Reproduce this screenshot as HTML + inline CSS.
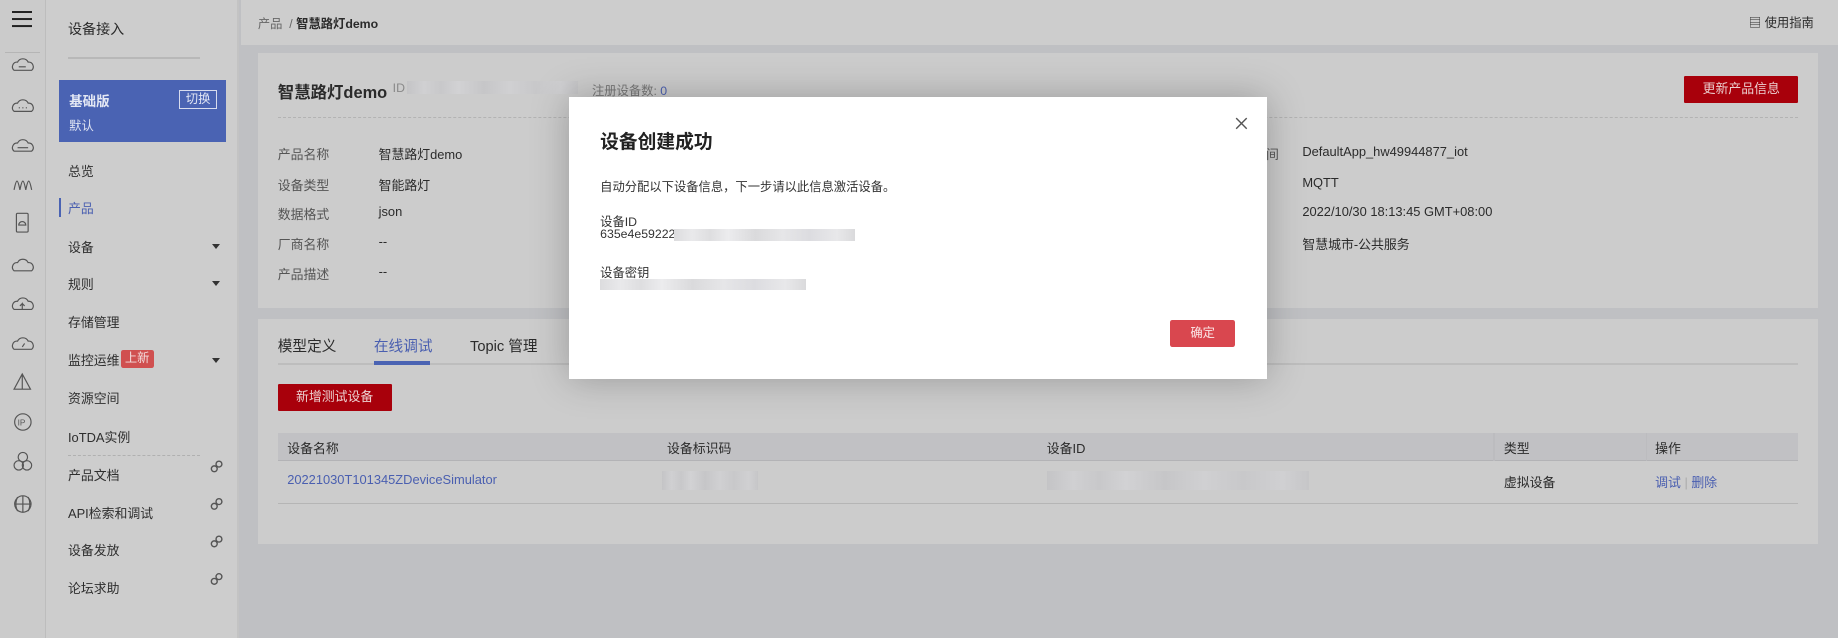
<!DOCTYPE html>
<html><head><meta charset="utf-8"><style>
*{margin:0;padding:0;box-sizing:border-box}
html,body{width:1838px;height:638px;overflow:hidden;background:#bfc0c3}
#w{zoom:1.1722;width:1568px;height:544px;position:relative;font-family:"Liberation Sans","Noto Sans CJK SC",sans-serif;font-size:11px;color:#2b2b2b}
.a{position:absolute;white-space:nowrap}
.rail{left:0;top:0;width:39px;height:544px;background:#cbcbcb;border-right:1px solid #bdbdbd}
.side{left:39px;top:0;width:165px;height:544px;background:#cdcdcd;border-right:2px solid #c3c3c3}
.nav{left:58px;font-size:11px;color:#2e2e2e}
.tri{left:181px;width:0;height:0;border-left:4px solid transparent;border-right:4px solid transparent;border-top:5px solid #333}
.card{background:#cccccc}
.lbl{left:237px;color:#555}
.val{left:323px}
.blur{background:linear-gradient(90deg,#c4c4c6,#d0d0d2 10%,#c8c8ca 20%,#d2d2d4 30%,#c6c6c8 45%,#d0d0d2 60%,#c8c8ca 75%,#d0d0d2 90%,#c6c6c8)}
.wblur{background:linear-gradient(90deg,#dcdcde,#e9e9eb 10%,#dedee0 20%,#ececee 30%,#dadadc 45%,#e6e6e8 60%,#dcdce0 75%,#e8e8ea 90%,#dadadc)}
</style></head><body><div id="w">
<div class="a rail">
<div class="a" style="left:10px;top:9px;width:17px;height:2px;background:#222;box-shadow:0 6px #222,0 12px #222"></div>
<div class="a" style="left:4px;top:44px;width:30px;height:1px;background:#b5b5b5"></div>
<svg class="a" style="left:0;top:0" width="39" height="544" fill="none" stroke="#555" stroke-width="1">
<path d="M12 60 a4 4 0 0 1 3-7 a5 5 0 0 1 9 0 a4 4 0 0 1 3 7 z"/><path d="M16 57h6"/>
<path d="M12 95 a4 4 0 0 1 3-7 a5 5 0 0 1 9 0 a4 4 0 0 1 3 7 z"/><path d="M16 92h1M19 92h1M22 92h1"/>
<path d="M12 129 a4 4 0 0 1 3-7 a5 5 0 0 1 9 0 a4 4 0 0 1 3 7 z"/><path d="M15 126h9"/>
<path d="M12 162c2-10 3-10 5 0c2-10 3-10 5 0c2-10 3-10 5 0"/>
<rect x="14" y="182" width="10" height="16" rx="1"/><path d="M16 192a3 3 0 0 1 6 0z"/>
<path d="M12 231 a4 4 0 0 1 3-7 a5 5 0 0 1 9 0 a4 4 0 0 1 3 7 z"/>
<path d="M12 264 a4 4 0 0 1 3-7 a5 5 0 0 1 9 0 a4 4 0 0 1 3 7 z"/><path d="M19 264v-5l-2 2M19 259l2 2"/>
<path d="M12 298 a4 4 0 0 1 3-7 a5 5 0 0 1 9 0 a4 4 0 0 1 3 7 z"/><path d="M19 296l2-3"/>
<path d="M19 319l-7 13h14z M19 319v13"/>
<circle cx="19.5" cy="360" r="7"/><text x="15" y="363" font-size="7" fill="#555" stroke="none" font-family="Liberation Sans">IP</text>
<circle cx="19.5" cy="390" r="4"/><circle cx="16" cy="397" r="4"/><circle cx="23" cy="397" r="4"/>
<circle cx="19.5" cy="430" r="7"/><path d="M12.5 430h14M19.5 423v14M15 424c-2 4-2 8 0 12M24 424c2 4 2 8 0 12"/>
</svg>
</div>
<div class="a side"></div>
<div class="a" style="left:58px;top:16px;font-size:12px">设备接入</div>
<div class="a" style="left:58px;top:49px;width:113px;height:1px;background:#b8b8b8"></div>
<div class="a" style="left:50px;top:68px;width:143px;height:53px;background:#4a63b3"></div>
<div class="a" style="left:59px;top:77px;color:#e4e8f4;font-weight:bold;font-size:11.5px">基础版</div>
<div class="a" style="left:59px;top:99px;color:#dfe4f2;font-size:10.5px">默认</div>
<div class="a" style="left:153px;top:77px;width:32px;height:16px;border:1px solid #d8dcee;color:#e2e6f4;font-size:10.5px;text-align:center;line-height:14px">切换</div>
<div class="a nav" style="top:137px">总览</div>
<div class="a" style="left:50px;top:169px;width:2px;height:16px;background:#4a63b3"></div>
<div class="a nav" style="top:169px;color:#4a5fb0">产品</div>
<div class="a nav" style="top:202px">设备</div><div class="a tri" style="top:208px"></div>
<div class="a nav" style="top:234px">规则</div><div class="a tri" style="top:240px"></div>
<div class="a nav" style="top:266px">存储管理</div>
<div class="a nav" style="top:299px">监控运维</div>
<div class="a" style="left:103px;top:299px;width:28px;height:15px;background:#d05050;color:#f3dede;font-size:10.5px;line-height:15px;text-align:center;border-radius:2px">上新</div>
<div class="a tri" style="top:305px"></div>
<div class="a nav" style="top:331px">资源空间</div>
<div class="a nav" style="top:364px">IoTDA实例</div>
<div class="a" style="left:58px;top:388px;width:113px;border-top:1px dashed #b0b0b0"></div>
<div class="a nav" style="top:397px">产品文档</div>
<div class="a nav" style="top:429px">API检索和调试</div>
<div class="a nav" style="top:461px">设备发放</div>
<div class="a nav" style="top:493px">论坛求助</div>
<svg class="a" style="left:178px;top:392px" width="14" height="120" fill="none" stroke="#555" stroke-width="1.2">
<g><rect x="6" y="1" width="5" height="5" rx="2.5" transform="rotate(45 8.5 3.5)"/><rect x="2" y="5" width="5" height="5" rx="2.5" transform="rotate(45 4.5 7.5)"/></g>
<g transform="translate(0,32)"><rect x="6" y="1" width="5" height="5" rx="2.5" transform="rotate(45 8.5 3.5)"/><rect x="2" y="5" width="5" height="5" rx="2.5" transform="rotate(45 4.5 7.5)"/></g>
<g transform="translate(0,64)"><rect x="6" y="1" width="5" height="5" rx="2.5" transform="rotate(45 8.5 3.5)"/><rect x="2" y="5" width="5" height="5" rx="2.5" transform="rotate(45 4.5 7.5)"/></g>
<g transform="translate(0,96)"><rect x="6" y="1" width="5" height="5" rx="2.5" transform="rotate(45 8.5 3.5)"/><rect x="2" y="5" width="5" height="5" rx="2.5" transform="rotate(45 4.5 7.5)"/></g>
</svg>
<!-- header -->
<div class="a" style="left:206px;top:0;width:1362px;height:38px;background:#cdcdcd"></div>
<div class="a" style="left:220px;top:12px;font-size:10.5px;color:#666">产品 &nbsp;/ <b style="color:#2b2b2b;font-weight:bold">智慧路灯demo</b></div>
<div class="a" style="left:1492px;top:11px;font-size:10.5px">&#9636; 使用指南</div>
<!-- card 1 -->
<div class="a card" style="left:220px;top:45px;width:1331px;height:218px"></div>
<div class="a" style="left:237px;top:67px;font-size:14px;font-weight:bold">智慧路灯demo</div>
<div class="a" style="left:335px;top:69px;font-size:10.5px;color:#888">ID</div>
<div class="a blur" style="left:347px;top:69px;width:146px;height:11px"></div>
<div class="a" style="left:505px;top:69px;font-size:10.5px;color:#777">注册设备数: <span style="color:#4a5fb0">0</span></div>
<div class="a" style="left:1437px;top:65px;width:97px;height:23px;background:#a8000b;color:#ecd0d0;text-align:center;line-height:23px;font-size:11px;border-radius:1px">更新产品信息</div>
<div class="a" style="left:237px;top:100px;width:1297px;border-top:1px dashed #b3b3b3"></div>
<div class="a lbl" style="top:123px">产品名称</div><div class="a val" style="top:123px">智慧路灯demo</div>
<div class="a lbl" style="top:149px">设备类型</div><div class="a val" style="top:149px">智能路灯</div>
<div class="a lbl" style="top:174px">数据格式</div><div class="a val" style="top:174px">json</div>
<div class="a lbl" style="top:200px">厂商名称</div><div class="a val" style="top:200px">--</div>
<div class="a lbl" style="top:225px">产品描述</div><div class="a val" style="top:225px">--</div>
<div class="a" style="left:1080px;top:123px;color:#555">间</div>
<div class="a" style="left:1111px;top:123px">DefaultApp_hw49944877_iot</div>
<div class="a" style="left:1111px;top:149px">MQTT</div>
<div class="a" style="left:1111px;top:174px">2022/10/30 18:13:45 GMT+08:00</div>
<div class="a" style="left:1111px;top:200px">智慧城市-公共服务</div>
<!-- card 2 -->
<div class="a card" style="left:220px;top:272px;width:1331px;height:192px"></div>
<div class="a" style="left:237px;top:310px;width:1297px;height:1px;background:#bdbdbd"></div>
<div class="a" style="left:237px;top:286px;font-size:12.5px">模型定义</div>
<div class="a" style="left:319px;top:286px;font-size:12.5px;color:#4a5fb0">在线调试</div>
<div class="a" style="left:319px;top:308px;width:48px;height:3px;background:#4a63b3"></div>
<div class="a" style="left:401px;top:286px;font-size:12.5px">Topic 管理</div>
<div class="a" style="left:237px;top:328px;width:97px;height:23px;background:#a8000b;color:#ecd0d0;text-align:center;line-height:23px;font-size:11px;border-radius:1px">新增测试设备</div>
<div class="a" style="left:237px;top:369px;width:1297px;height:24px;background:#c1c1c4;border-bottom:1px solid #b3b3b6"></div>
<div class="a" style="left:245px;top:374px">设备名称</div>
<div class="a" style="left:569px;top:374px">设备标识码</div>
<div class="a" style="left:893px;top:374px">设备ID</div>
<div class="a" style="left:1274px;top:369px;width:1px;height:24px;background:#bcbcbf"></div>
<div class="a" style="left:1404px;top:369px;width:1px;height:24px;background:#bcbcbf"></div>
<div class="a" style="left:1283px;top:374px">类型</div>
<div class="a" style="left:1412px;top:374px">操作</div>
<div class="a" style="left:245px;top:403px;color:#4a5fb0">20221030T101345ZDeviceSimulator</div>
<div class="a blur" style="left:565px;top:402px;width:82px;height:16px"></div>
<div class="a blur" style="left:893px;top:402px;width:224px;height:16px"></div>
<div class="a" style="left:1283px;top:403px">虚拟设备</div>
<div class="a" style="left:1412px;top:403px;color:#4a5fb0">调试 <span style="color:#aaa">|</span> 删除</div>
<div class="a" style="left:237px;top:429px;width:1297px;height:1px;background:#b5b5b5"></div>
<!-- modal -->
<div class="a" style="left:485px;top:83px;width:596px;height:240px;background:#fff;box-shadow:0 0 30px rgba(0,0,0,.25)"></div>
<svg class="a" style="left:1054px;top:100px" width="11" height="11" stroke="#555" stroke-width="1.2"><path d="M1 1L10 10M10 1L1 10"/></svg>
<div class="a" style="left:512px;top:108px;font-size:16px;font-weight:bold;color:#222">设备创建成功</div>
<div class="a" style="left:512px;top:151px;font-size:10.5px;color:#333">自动分配以下设备信息，下一步请以此信息激活设备。</div>
<div class="a" style="left:512px;top:181px;font-size:10.5px;color:#333">设备ID</div>
<div class="a" style="left:512px;top:194px;font-size:10.5px;color:#333">635e4e59222</div>
<div class="a wblur" style="left:575px;top:195px;width:154px;height:11px"></div>
<div class="a" style="left:512px;top:224px;font-size:10.5px;color:#333">设备密钥</div>
<div class="a wblur" style="left:512px;top:238px;width:176px;height:9px"></div>
<div class="a" style="left:998px;top:273px;width:56px;height:23px;background:#d9474f;color:#fbe8e8;text-align:center;line-height:23px;font-size:10.5px;border-radius:2px">确定</div>
</div></body></html>
